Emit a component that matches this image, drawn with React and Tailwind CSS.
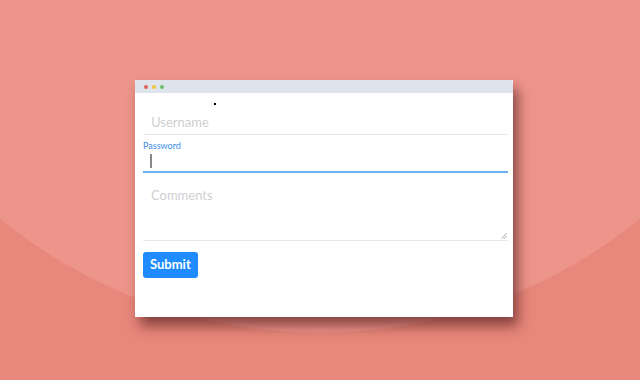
export default function App() {
  return (
    <div className="w-[640px] h-[380px] overflow-hidden bg-[#e8877b] bg-[radial-gradient(circle_at_320px_-174px,#ee958b_506px,#e8877b_507px)] pt-[80px] pl-[135px] font-['Lato',sans-serif]">
      <div className="relative w-[378px] h-[237px] bg-white shadow-[5px_9px_12px_rgba(70,20,20,0.6)] flex flex-col">
        <div className="h-[13px] bg-[#dfe3eb] flex items-center gap-[4px] pl-[9px] rounded-t-[2px]">
          <span className="w-[4px] h-[4px] rounded-full bg-[#e0605a]" />
          <span className="w-[4px] h-[4px] rounded-full bg-[#f0c43a]" />
          <span className="w-[4px] h-[4px] rounded-full bg-[#6cc06a]" />
        </div>
        <div className="absolute left-[79px] top-[23px] w-[2px] h-[2px] bg-black" />
        <div className="flex flex-col px-[8px] pr-[5px]">
          <div className="h-[42px] border-b border-b-[#e8e8e8] flex items-end pb-[4px] pl-[8px]">
            <span className="text-[13px] leading-[16px] text-[#cfcfcf]">Username</span>
          </div>
          <div className="pt-[5px] text-[9px] leading-[11px] text-[#3a8ee6]">Password</div>
          <div className="h-[20px] flex items-center pl-[7px]">
            <span className="w-[2px] h-[14px] bg-[#888]" />
          </div>
          <div className="h-[2px] bg-[#6ab2ef]" />
          <div className="relative h-[68px] border-b border-b-[#e8e8e8] pt-[9px] pl-[8px]">
            <span className="text-[13px] leading-[16px] text-[#d0d0d0]">Comments</span>
            <svg className="absolute right-[1px] bottom-[1px]" width="6" height="6" viewBox="0 0 6 6">
              <path d="M0.5 5.5 L5.5 0.5 M3 5.5 L5.5 3" stroke="#888" strokeWidth="0.8" />
            </svg>
          </div>
          <div className="pt-[10px]">
            <button className="h-[26px] px-[7px] rounded-[3px] bg-[#1e8cff] text-white text-[13px] font-bold leading-none">
              Submit
            </button>
          </div>
        </div>
      </div>
    </div>
  );
}
